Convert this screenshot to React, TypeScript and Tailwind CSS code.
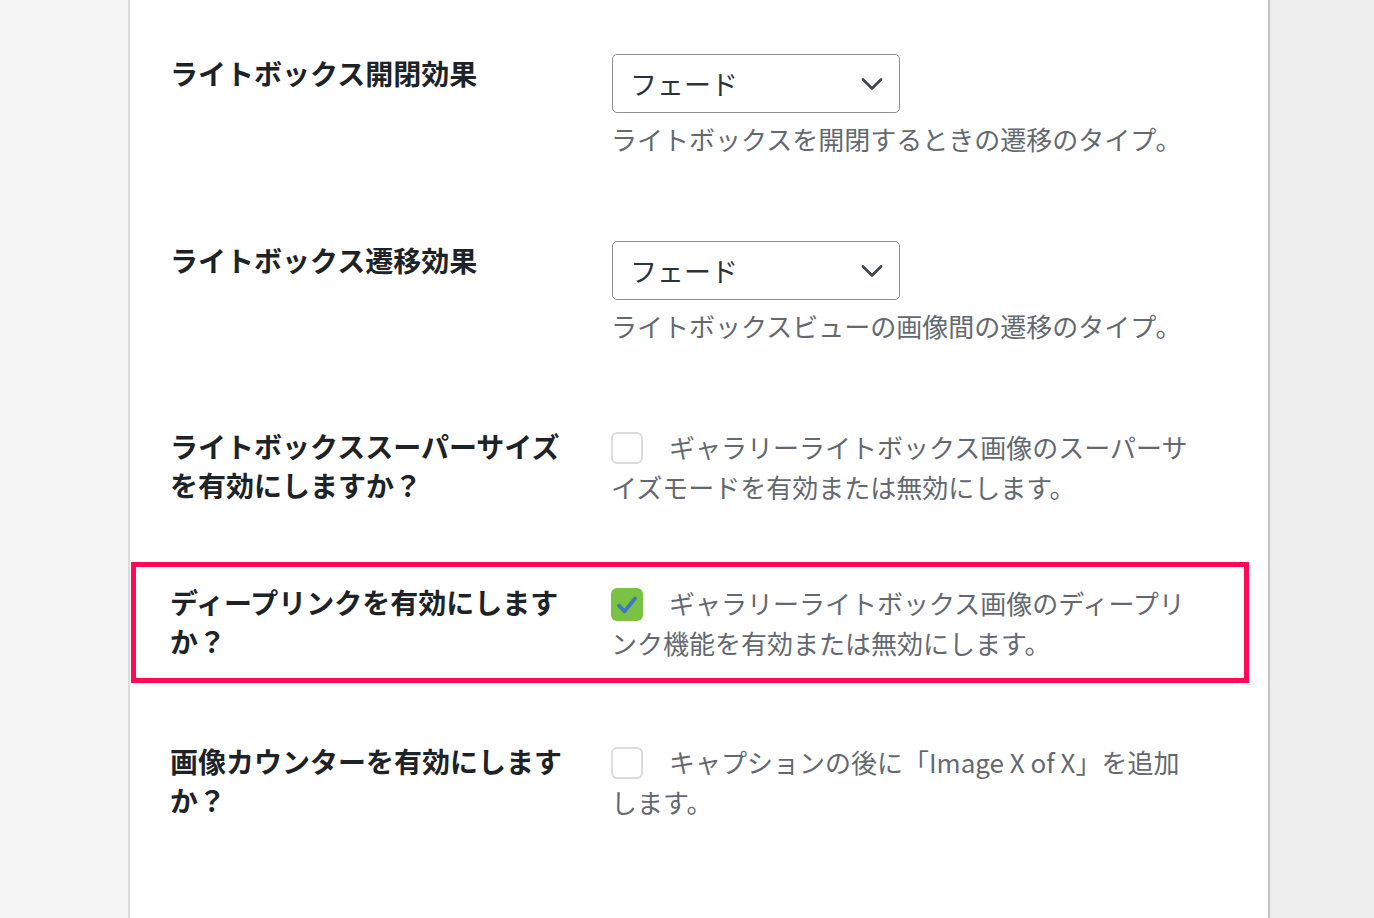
import React from 'react';

const font = { fontFamily: '"Noto Sans CJK JP", "Noto Sans", sans-serif' };

function Chevron() {
  return (
    <svg width="22" height="14" viewBox="0 0 22 14" fill="none">
      <path d="M2 2.5l9 9 9-9" stroke="#3c434a" strokeWidth="2.6" strokeLinecap="round" strokeLinejoin="round" />
    </svg>
  );
}

function SelectField({ value, desc }: { value: string; desc: string }) {
  return (
    <div>
      <div className="ml-[1px] flex h-[59px] w-[288px] items-center justify-between rounded-[5px] border-[1.5px] border-[#8c8f94] bg-white pl-[17px] pr-[16px]">
        <span className="text-[27px] leading-none text-[#2c3338]">{value}</span>
        <Chevron />
      </div>
      <p className="mb-[3px] mt-[6px] text-[26px] leading-[39px] text-[#646970]">{desc}</p>
    </div>
  );
}

function CheckField({ checked, desc }: { checked?: boolean; desc: string }) {
  return (
    <p className="text-[26px] leading-[39px] text-[#646970]">
      {checked ? (
        <span className="relative top-[-2px] mr-[26px] inline-flex h-[33px] w-[32px] items-center justify-center rounded-[6px] bg-[#7bc143] align-middle">
          <svg width="22" height="20" viewBox="0 0 22 20" fill="none">
            <path d="M3 10.5l5.5 6L19 3.5" stroke="#3b78c4" strokeWidth="3.6" strokeLinecap="round" strokeLinejoin="round" />
          </svg>
        </span>
      ) : (
        <span className="relative top-[-3px] mr-[26px] inline-block h-[32px] w-[32px] rounded-[6px] border-2 border-[#dcdcde] bg-white align-middle" />
      )}
      {desc}
    </p>
  );
}

function Label({ children }: { children: React.ReactNode }) {
  return (
    <div className="w-[441px] shrink-0 pr-[43px] text-[28px] font-bold leading-[39px] text-[#1d2327]">
      {children}
    </div>
  );
}

export default function App() {
  return (
    <div className="flex h-[918px] w-full overflow-hidden bg-[#eeeeee]" style={font}>
      <div className="w-[130px] shrink-0 border-r-2 border-[#dcdcde] bg-[#f5f5f5]" />
      <main className="w-[1140px] shrink-0 border-r-2 border-[#c3c4c7] bg-white pt-[14px]">
        <div className="flex py-[40px] pl-[40px]">
          <Label>ライトボックス開閉効果</Label>
          <div className="w-[588px]">
            <SelectField value="フェード" desc="ライトボックスを開閉するときの遷移のタイプ。" />
          </div>
        </div>

        <div className="flex py-[40px] pl-[40px]">
          <Label>ライトボックス遷移効果</Label>
          <div className="w-[588px]">
            <SelectField value="フェード" desc="ライトボックスビューの画像間の遷移のタイプ。" />
          </div>
        </div>

        <div className="flex pb-[40px] pl-[40px] pt-[39px]">
          <Label>ライトボックススーパーサイズを有効にしますか？</Label>
          <div className="w-[588px]">
            <CheckField desc="ギャラリーライトボックス画像のスーパーサイズモードを有効または無効にします。" />
          </div>
        </div>

        {/* highlighted row */}
        <div className="mb-[19px] ml-[1px] mr-[19px] mt-[16px] flex border-[5px] border-[#ff0a55] py-[16px] pl-[34px]">
          <Label>ディープリンクを有効にしますか？</Label>
          <div className="w-[588px]">
            <CheckField checked desc="ギャラリーライトボックス画像のディープリンク機能を有効または無効にします。" />
          </div>
        </div>

        <div className="flex py-[40px] pl-[40px]">
          <Label>画像カウンターを有効にしますか？</Label>
          <div className="w-[588px]">
            <CheckField desc="キャプションの後に「Image X of X」を追加します。" />
          </div>
        </div>
      </main>
      <div className="flex-1" />
    </div>
  );
}
